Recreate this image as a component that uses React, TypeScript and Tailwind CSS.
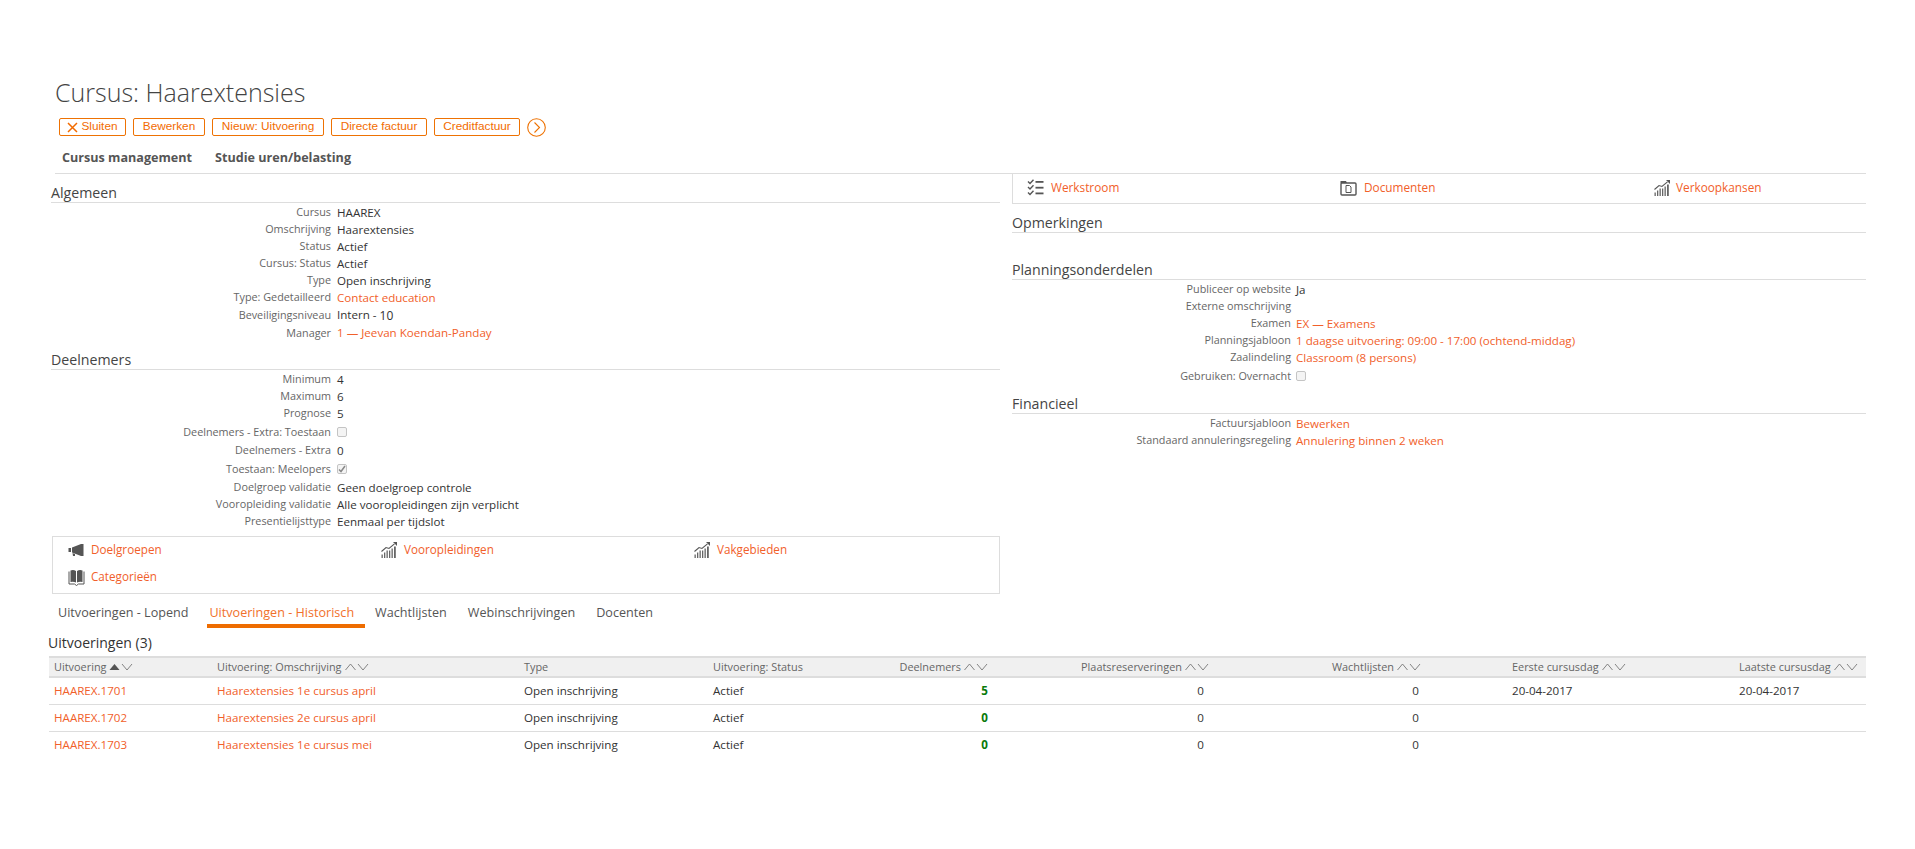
const LINK = "text-[#f1602a]";

function ChartIcon() {
  return (
    <svg width="16" height="16" viewBox="0 0 16 16" className="shrink-0">
      <path d="M0.5 9.5 L5 5.5 L8 6.5 L13.5 1.8" fill="none" stroke="#555" strokeWidth="1.1" />
      <path d="M12 0 H16 V4 Z" fill="#555" />
      <g fill="#666">
        <rect x="0.5" y="12.5" width="1.3" height="3.5" />
        <rect x="3" y="10.5" width="1.3" height="5.5" />
        <rect x="5.5" y="8.5" width="1.3" height="7.5" />
        <rect x="8" y="8.5" width="1.3" height="7.5" />
        <rect x="10.5" y="6.5" width="1.3" height="9.5" />
        <rect x="13" y="4.5" width="1.8" height="11.5" />
      </g>
    </svg>
  );
}

function MegaphoneIcon() {
  return (
    <svg width="16" height="12" viewBox="0 0 16 12" className="shrink-0">
      <path d="M0.5 4 H3 V8 H0.5 Z" fill="#555" />
      <path d="M4 3.5 L13 0 H15.5 V12 H13 L4 8.5 Z" fill="#555" />
      <path d="M4.5 9 L7 10 V12 H5 Z" fill="#555" />
    </svg>
  );
}

function BookIcon() {
  return (
    <svg width="17" height="17" viewBox="0 0 17 17" className="shrink-0">
      <path d="M2.5 1.5 Q5.5 0.5 8 2 V13.5 Q5.5 12.2 2.5 13 Z" fill="#555" />
      <path d="M9 2 Q11.5 0.5 14.5 1.5 V13 Q11.5 12.2 9 13.5 Z" fill="#555" />
      <path d="M1 2.5 V15 H6.5 L8.5 16.5 L10.5 15 H16 V2.5" fill="none" stroke="#555" strokeWidth="1" />
    </svg>
  );
}

function ChecklistIcon() {
  return (
    <svg width="17" height="17" viewBox="0 0 17 17" className="shrink-0">
      <g fill="none" stroke="#555" strokeWidth="1.4">
        <path d="M1 2.5 L3 4.5 L6.5 0.8" />
        <path d="M1 8 L3 10 L6.5 6.3" />
        <path d="M1 13.5 L3 15.5 L6.5 11.8" />
      </g>
      <g fill="#555">
        <rect x="8.5" y="2" width="8" height="1.8" />
        <rect x="8.5" y="7.8" width="8" height="1.8" />
        <rect x="8.5" y="13.5" width="8" height="1.8" />
      </g>
    </svg>
  );
}

function FolderDocIcon() {
  return (
    <svg width="17" height="16" viewBox="0 0 17 16" className="shrink-0">
      <path d="M0.5 3 V1 H6 L7 3 Z" fill="#555" />
      <rect x="1" y="3" width="15" height="12" rx="1" fill="none" stroke="#555" strokeWidth="1.4" />
      <path d="M6 5.5 H9.5 L11 7 V12.5 H6 Z" fill="none" stroke="#555" strokeWidth="1" />
    </svg>
  );
}

function ChevronSort({ active }: { active?: boolean }) {
  return (
    <svg width="24" height="8" viewBox="0 0 24 8" className="ml-[3px] shrink-0">
      {active ? (
        <path d="M0.5 7 L5.5 1 L10.5 7 Z" fill="#555" />
      ) : (
        <path d="M0.5 7 L5.5 1 L10.5 7" fill="none" stroke="#777" strokeWidth="0.9" />
      )}
      <path d="M13 1 L18 7 L23 1" fill="none" stroke="#777" strokeWidth="0.9" />
    </svg>
  );
}

function Checkbox({ checked }: { checked?: boolean }) {
  return (
    <span className="flex h-[10px] w-[10px] items-center justify-center rounded-[2px] border border-[#c4c4c4] bg-[#f4f4f4]">
      {checked && (
        <svg width="8" height="8" viewBox="0 0 8 8">
          <path d="M1 4.5 L3 6.5 L7 1" fill="none" stroke="#888" strokeWidth="1.5" />
        </svg>
      )}
    </span>
  );
}

function Section({ title, className = "" }: { title: string; className?: string }) {
  return (
    <div className={`flex items-end border-b border-[#dddddd] text-[14.2px] leading-[18px] text-[#444] ${className}`}>
      {title}
    </div>
  );
}

type RowProps = { label: string; value?: React.ReactNode; link?: boolean; h?: string; right?: boolean };

function Row({ label, value, link, h = "h-[17px]", right }: RowProps) {
  return (
    <div className={`flex items-center ${h}`}>
      <div className={`shrink-0 text-right text-[10.8px] text-[#666] ${right ? "w-[279px]" : "w-[280px]"}`}>{label}</div>
      <div className={`text-[11.6px] ${right ? "ml-[5px]" : "ml-[6px]"} ${link ? LINK : "text-[#333]"}`}>{value}</div>
    </div>
  );
}

function IconLink({ icon, text }: { icon: React.ReactNode; text: string }) {
  return (
    <div className="flex h-[24px] items-center">
      <div className="flex w-[25px] shrink-0 items-center pl-[2px]">{icon}</div>
      <span className={`text-[11.7px] ${LINK}`}>{text}</span>
    </div>
  );
}

const buttons = ["Bewerken", "Nieuw: Uitvoering", "Directe factuur", "Creditfactuur"];
const btnW = ["w-[72px]", "w-[112px]", "w-[96px]", "w-[86px]"];

const tabs = ["Uitvoeringen - Lopend", "Uitvoeringen - Historisch", "Wachtlijsten", "Webinschrijvingen", "Docenten"];

const rows = [
  { id: "HAAREX.1701", name: "Haarextensies 1e cursus april", n: "5", a: "20-04-2017", b: "20-04-2017" },
  { id: "HAAREX.1702", name: "Haarextensies 2e cursus april", n: "0", a: "", b: "" },
  { id: "HAAREX.1703", name: "Haarextensies 1e cursus mei", n: "0", a: "", b: "" },
];

export default function App() {
  return (
    <div
      className="min-h-[849px] bg-white pl-[48px] pr-[49px] pt-[77px] text-[#333]"
      style={{ fontFamily: '"Open Sans", sans-serif' }}
    >
      <h1 className="ml-[7px] text-[25px] font-light leading-[30px] text-[#444]">Cursus: Haarextensies</h1>

      <div
        className="ml-[11px] mt-[11px] flex h-[18px] items-center gap-[7px] text-[11.8px] text-[#f26b00]"
        style={{ fontFamily: '"Liberation Sans", sans-serif' }}
      >
        <div className="flex h-[18px] w-[67px] items-center justify-center gap-[3px] rounded-[2px] border border-[#ee7203]">
          <svg width="11" height="11" viewBox="0 0 11 11">
            <path d="M1 1 L10 10 M10 1 L1 10" stroke="#f26b00" strokeWidth="1.5" />
          </svg>
          Sluiten
        </div>
        {buttons.map((b, i) => (
          <div
            key={b}
            className={`flex h-[18px] items-center justify-center rounded-[2px] border border-[#ee7203] ${btnW[i]}`}
          >
            {b}
          </div>
        ))}
        <svg width="19" height="19" viewBox="0 0 19 19" className="shrink-0">
          <circle cx="9.5" cy="9.5" r="8.8" fill="none" stroke="#ee7203" strokeWidth="1.1" />
          <path d="M7.5 4.5 L12.5 9.5 L7.5 14.5" fill="none" stroke="#ee7203" strokeWidth="1.1" />
        </svg>
      </div>

      <div className="ml-[7px] flex gap-[23px] border-b border-[#dddddd] pb-[6px] pl-[7px] pt-[13px] text-[12.6px] font-bold leading-[18px] text-[#555]">
        <span>Cursus management</span>
        <span>Studie uren/belasting</span>
      </div>

      <div className="ml-[3px] flex gap-[12px]">
        <div className="w-[949px] shrink-0">
          <Section title="Algemeen" className="h-[29px]" />
          <div className="mt-px">
            <Row label="Cursus" value="HAAREX" />
            <Row label="Omschrijving" value="Haarextensies" />
            <Row label="Status" value="Actief" />
            <Row label="Cursus: Status" value="Actief" />
            <Row label="Type" value="Open inschrijving" />
            <Row label="Type: Gedetailleerd" value="Contact education" link />
            <Row
              label="Beveiligingsniveau"
              h="h-[18px]"
              value={
                <>
                  Intern - <span className="align-[-1px] text-[12px]">10</span>
                </>
              }
            />
            <Row label="Manager" value="1 — Jeevan Koendan-Panday" link h="h-[18px]" />
          </div>

          <Section title="Deelnemers" className="mt-[9px]" />
          <div className="mt-px">
            <Row label="Minimum" value="4" />
            <Row label="Maximum" value="6" />
            <Row label="Prognose" value="5" />
            <Row label="Deelnemers - Extra: Toestaan" value={<Checkbox />} h="h-[20px]" />
            <Row label="Deelnemers - Extra" value="0" />
            <Row label="Toestaan: Meelopers" value={<Checkbox checked />} h="h-[20px]" />
            <Row label="Doelgroep validatie" value="Geen doelgroep controle" />
            <Row label="Vooropleiding validatie" value="Alle vooropleidingen zijn verplicht" />
            <Row label="Presentielijsttype" value="Eenmaal per tijdslot" />
          </div>

          <div className="ml-px mt-[6px] grid grid-cols-[313px_313px_auto] gap-y-[3px] border border-[#dddddd] pb-[4px] pl-[13px] pt-px">
            <IconLink icon={<MegaphoneIcon />} text="Doelgroepen" />
            <IconLink icon={<ChartIcon />} text="Vooropleidingen" />
            <IconLink icon={<ChartIcon />} text="Vakgebieden" />
            <IconLink icon={<BookIcon />} text="Categorieën" />
          </div>
        </div>

        <div className="flex-1">
          <div className="grid h-[30px] grid-cols-[313px_314px_auto] items-center border-b border-l border-[#dddddd] pb-[2px] pl-[14px]">
            <div className="flex items-center">
              <ChecklistIcon />
              <span className={`ml-[7px] text-[11.8px] ${LINK}`}>Werkstroom</span>
            </div>
            <div className="flex items-center">
              <FolderDocIcon />
              <span className={`ml-[7px] text-[11.8px] ${LINK}`}>Documenten</span>
            </div>
            <div className="flex items-center">
              <ChartIcon />
              <span className={`ml-[6px] text-[11.8px] ${LINK}`}>Verkoopkansen</span>
            </div>
          </div>

          <Section title="Opmerkingen" className="mt-[11px] h-[18px]" />
          <Section title="Planningsonderdelen" className="mt-[28px] h-[19px]" />
          <div className="mt-px">
            <Row right label="Publiceer op website" value="Ja" />
            <Row right label="Externe omschrijving" value="" />
            <Row right label="Examen" value="EX — Examens" link />
            <Row right label="Planningsjabloon" value="1 daagse uitvoering: 09:00 - 17:00 (ochtend-middag)" link />
            <Row right label="Zaalindeling" value="Classroom (8 persons)" link />
            <Row right label="Gebruiken: Overnacht" value={<Checkbox />} h="h-[20px]" />
          </div>
          <Section title="Financieel" className="mt-[9px] h-[19px]" />
          <div className="mt-px">
            <Row right label="Factuursjabloon" value="Bewerken" link />
            <Row right label="Standaard annuleringsregeling" value="Annulering binnen 2 weken" link />
          </div>
        </div>
      </div>

      <div className="ml-[8px] mt-[9px] flex gap-[8px] text-[12.6px] leading-[18px] text-[#555]">
        {tabs.map((t, i) => (
          <div
            key={t}
            className={`border-b-4 pb-[2px] pl-[2px] pr-[11px] pt-px ${
              i === 1 ? "border-[#ee6c00] text-[#f1702a]" : "border-transparent"
            }`}
          >
            {t}
          </div>
        ))}
      </div>

      <div className="mt-[6px] text-[14px] leading-[18px] text-[#333]">Uitvoeringen (3)</div>

      <table className="ml-px mt-[4px] w-[1817px] table-fixed text-[11.6px] text-[#333]">
        <colgroup>
          <col className="w-[163px]" />
          <col className="w-[307px]" />
          <col className="w-[189px]" />
          <col className="w-[122px]" />
          <col className="w-[163px]" />
          <col className="w-[221px]" />
          <col className="w-[293px]" />
          <col className="w-[227px]" />
          <col className="w-[132px]" />
        </colgroup>
        <thead>
          <tr className="h-[20px] border-y-2 border-[#dddddd] bg-[#f0f0f0] text-[10.9px] text-[#666]">
            <th className="pl-[5px] text-left font-normal">
              <span className="flex items-center">
                Uitvoering
                <ChevronSort active />
              </span>
            </th>
            <th className="pl-[5px] text-left font-normal">
              <span className="flex items-center">
                Uitvoering: Omschrijving
                <ChevronSort />
              </span>
            </th>
            <th className="pl-[5px] text-left font-normal">Type</th>
            <th className="pl-[5px] text-left font-normal">Uitvoering: Status</th>
            <th className="pr-[5px] font-normal">
              <span className="flex items-center justify-end">
                Deelnemers
                <ChevronSort />
              </span>
            </th>
            <th className="pr-[5px] font-normal">
              <span className="flex items-center justify-end">
                Plaatsreserveringen
                <ChevronSort />
              </span>
            </th>
            <th className="pr-[86px] font-normal">
              <span className="flex items-center justify-end">
                Wachtlijsten
                <ChevronSort />
              </span>
            </th>
            <th className="pl-[5px] text-left font-normal">
              <span className="flex items-center">
                Eerste cursusdag
                <ChevronSort />
              </span>
            </th>
            <th className="pl-[5px] text-left font-normal">
              <span className="flex items-center">
                Laatste cursusdag
                <ChevronSort />
              </span>
            </th>
          </tr>
        </thead>
        <tbody>
          {rows.map((r, i) => (
            <tr key={r.id} className={`h-[27px] ${i < 2 ? "border-b border-[#dddddd]" : ""}`}>
              <td className={`pl-[5px] ${LINK}`}>{r.id}</td>
              <td className={`pl-[5px] ${LINK}`}>{r.name}</td>
              <td className="pl-[5px]">Open inschrijving</td>
              <td className="pl-[5px]">Actief</td>
              <td className="pr-[5px] text-right font-bold text-[#0a7a0a]">{r.n}</td>
              <td className="pr-[10px] text-right">0</td>
              <td className="pr-[88px] text-right">0</td>
              <td className="pl-[5px]">{r.a}</td>
              <td className="pl-[5px]">{r.b}</td>
            </tr>
          ))}
        </tbody>
      </table>
    </div>
  );
}
